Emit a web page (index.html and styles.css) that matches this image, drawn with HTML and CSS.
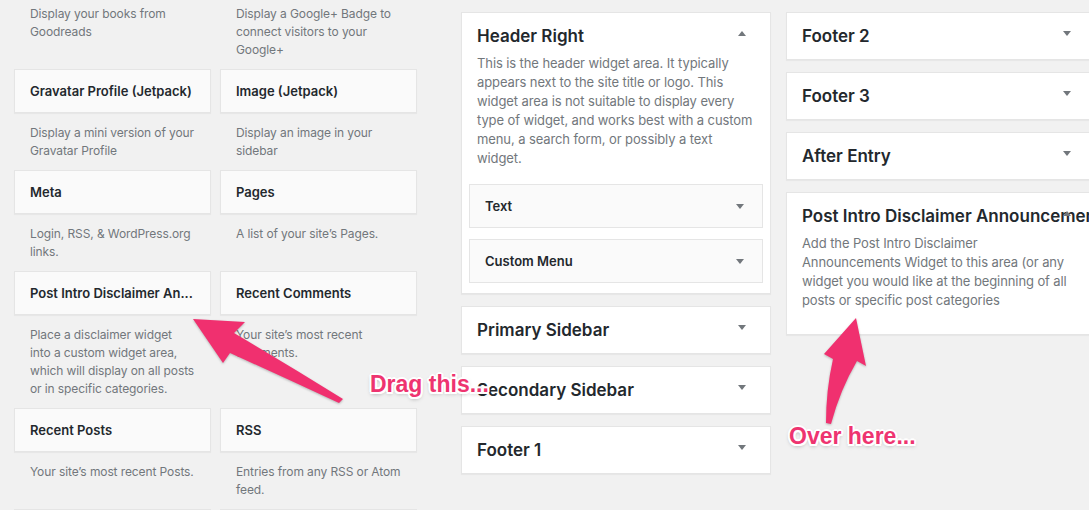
FILE: index.html
```html
<!DOCTYPE html>
<html lang="en">
<head>
<meta charset="utf-8">
<title>Widgets</title>
<link rel="stylesheet" href="styles.css">
</head>
<body>
<div class="screen">
  <div class="available">
    <div class="widget-grid">
      <div class="widget"><div class="widget-top">Goodreads</div><p class="widget-desc">Display your books from Goodreads</p></div>
      <div class="widget"><div class="widget-top">Google+ Badge (Jetpack)</div><p class="widget-desc">Display a Google+ Badge to connect visitors to your Google+</p></div>
      <div class="widget"><div class="widget-top">Gravatar Profile (Jetpack)</div><p class="widget-desc">Display a mini version of your Gravatar Profile</p></div>
      <div class="widget"><div class="widget-top">Image (Jetpack)</div><p class="widget-desc">Display an image in your sidebar</p></div>
      <div class="widget"><div class="widget-top">Meta</div><p class="widget-desc">Login, RSS, &amp; WordPress.org links.</p></div>
      <div class="widget"><div class="widget-top">Pages</div><p class="widget-desc">A list of your site’s Pages.</p></div>
      <div class="widget"><div class="widget-top">Post Intro Disclaimer An...</div><p class="widget-desc">Place a disclaimer widget into a custom widget area, which will display on all posts or in specific categories.</p></div>
      <div class="widget"><div class="widget-top">Recent Comments</div><p class="widget-desc">Your site’s most recent comments.</p></div>
      <div class="widget"><div class="widget-top">Recent Posts</div><p class="widget-desc">Your site’s most recent Posts.</p></div>
      <div class="widget"><div class="widget-top">RSS</div><p class="widget-desc">Entries from any RSS or Atom feed.</p></div>
      <div class="widget"><div class="widget-top">Search</div><p class="widget-desc">A search form for your site.</p></div>
      <div class="widget"><div class="widget-top">Tag Cloud</div><p class="widget-desc">A cloud of your most used tags.</p></div>
    </div>
  </div>

  <div class="area-col">
    <section class="area open">
      <h2 class="area-title">Header Right</h2>
      <span class="toggle up"></span>
      <p class="area-desc">This is the header widget area. It typically appears next to the site title or logo. This widget area is not suitable to display every type of widget, and works best with a custom menu, a search form, or possibly a text widget.</p>
      <div class="area-widgets">
        <div class="w-card">Text<span class="toggle small"></span></div>
        <div class="w-card">Custom Menu<span class="toggle small"></span></div>
      </div>
    </section>
    <section class="area"><h2 class="area-title">Primary Sidebar</h2><span class="toggle"></span></section>
    <section class="area"><h2 class="area-title">Secondary Sidebar</h2><span class="toggle"></span></section>
    <section class="area"><h2 class="area-title">Footer 1</h2><span class="toggle"></span></section>
  </div>

  <div class="area-col right">
    <section class="area"><h2 class="area-title">Footer 2</h2><span class="toggle"></span></section>
    <section class="area"><h2 class="area-title">Footer 3</h2><span class="toggle"></span></section>
    <section class="area"><h2 class="area-title">After Entry</h2><span class="toggle"></span></section>
    <section class="area open">
      <h2 class="area-title">Post Intro Disclaimer Announcements</h2>
      <span class="toggle up"></span>
      <p class="area-desc">Add the Post Intro Disclaimer Announcements Widget to this area (or any widget you would like at the beginning of all posts or specific post categories</p>
      <div class="area-widgets"></div>
    </section>
  </div>

  <svg class="annotations" width="1089" height="510" viewBox="0 0 1089 510" aria-hidden="true">
    <path class="arrow" d="M193 319 L245 322 L234 333 Q290 366 343 399 L339 403 Q285 378 230 353 L223 363 Z"/>
    <path class="arrow" d="M856 318 L866 366 L857 361 Q840 390 831 424 L826 423 Q826 390 833 359 L824 354 Z"/>
  </svg>
  <span class="note note-drag">Drag this...</span>
  <span class="note note-over">Over here...</span>
</div>
</body>
</html>
```

FILE: styles.css
```css
* { box-sizing: border-box; }

html, body {
  margin: 0;
  padding: 0;
  background: #f1f1f1;
  overflow: hidden;
}

body {
  width: 1089px;
  height: 510px;
  font-family: "Inter", "Liberation Sans", sans-serif;
  color: #23282d;
}

.screen {
  position: relative;
  display: flex;
  align-items: flex-start;
  padding-left: 14px;
  height: 510px;
  overflow: hidden;
}

/* Available widgets */
.available {
  width: 403px;
  flex-shrink: 0;
  margin-top: -50px;
}

.widget-grid {
  display: grid;
  grid-template-columns: 197px 197px;
  column-gap: 9px;
  align-items: start;
}

.widget-top {
  height: 44px;
  background: #fafafa;
  border: 1px solid #e5e5e5;
  box-shadow: 0 1px 1px rgba(0, 0, 0, 0.04);
  padding: 12px 15px;
  font-size: 13px;
  line-height: 18px;
  font-weight: 600;
  color: #23282d;
  white-space: nowrap;
  overflow: hidden;
}

.widget-desc {
  margin: 11px 0 10px;
  padding: 0 16px;
  font-size: 12px;
  line-height: 18px;
  letter-spacing: -0.1px;
  color: #72777c;
}

/* Widget areas */
.area-col {
  width: 310px;
  flex-shrink: 0;
  margin-top: 12px;
  margin-left: 44px;
}

.area-col.right {
  margin-left: 15px;
}

.area {
  position: relative;
  background: #fff;
  border: 1px solid #e5e5e5;
  box-shadow: 0 1px 1px rgba(0, 0, 0, 0.04);
  margin-bottom: 12px;
}

.area-title {
  margin: 0;
  padding: 13px 40px 13px 15px;
  font-size: 17px;
  line-height: 20px;
  font-weight: 600;
  color: #23282d;
  white-space: nowrap;
}

.area.open .area-title {
  padding-bottom: 8px;
}

.area-desc {
  margin: 0;
  padding: 0 14px 16px 15px;
  font-size: 13px;
  line-height: 19px;
  letter-spacing: -0.1px;
  color: #72777c;
}

.right .area-desc {
  padding-right: 22px;
}

.area-widgets {
  display: flex;
  flex-direction: column;
  gap: 11px;
  padding: 0 7px 10px;
}

.area-widgets:empty {
  padding-bottom: 8px;
}

.w-card {
  position: relative;
  height: 44px;
  background: #fafafa;
  border: 1px solid #e5e5e5;
  padding: 12px 15px;
  font-size: 13px;
  line-height: 18px;
  font-weight: 600;
  color: #23282d;
}

.toggle {
  position: absolute;
  right: 24px;
  top: 18px;
  width: 0;
  height: 0;
  border-left: 4px solid transparent;
  border-right: 4px solid transparent;
  border-top: 5px solid #72777c;
}

.toggle.up {
  border-top: 0;
  border-bottom: 5px solid #72777c;
}

.toggle.small {
  right: 18px;
  top: 19px;
}

/* Annotations */
.annotations {
  position: absolute;
  left: 0;
  top: 0;
  pointer-events: none;
  filter: drop-shadow(0 1px 1px rgba(0, 0, 0, 0.25));
}

.arrow {
  fill: #f0306f;
}

.note {
  position: absolute;
  font-family: "Liberation Sans", Arial, sans-serif;
  font-weight: 700;
  font-size: 23px;
  line-height: 23px;
  color: #ee3470;
  white-space: nowrap;
  text-shadow:
    2px 0 0 #fff, -2px 0 0 #fff, 0 2px 0 #fff, 0 -2px 0 #fff,
    1.5px 1.5px 0 #fff, -1.5px 1.5px 0 #fff, 1.5px -1.5px 0 #fff, -1.5px -1.5px 0 #fff,
    0 2px 4px rgba(0, 0, 0, 0.35);
}

.note-drag {
  left: 370px;
  top: 373px;
}

.note-over {
  left: 789px;
  top: 425px;
}
```
